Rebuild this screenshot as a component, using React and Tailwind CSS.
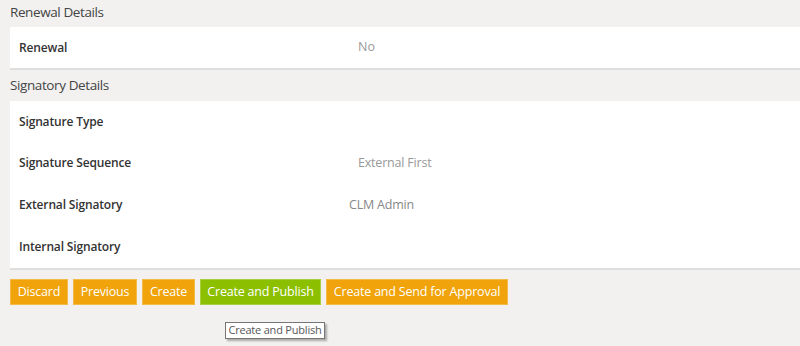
import React from 'react'

const font = { fontFamily: '"Open Sans", "Segoe UI", Arial, sans-serif' }

const labelCls = 'text-[12px] font-semibold text-[#333] tracking-[-0.15px]'

export default function App() {
  const buttons = [
    { text: 'Discard', w: 'w-[58px]', bg: 'bg-[#f0a30a]' },
    { text: 'Previous', w: 'w-[64px]', bg: 'bg-[#f0a30a]' },
    { text: 'Create', w: 'w-[53px]', bg: 'bg-[#f0a30a]' },
    { text: 'Create and Publish', w: 'w-[121px]', bg: 'bg-[#8cbf00]' },
    { text: 'Create and Send for Approval', w: 'w-[182px]', bg: 'bg-[#f0a30a]' },
  ]
  return (
    <div className="w-[800px] h-[346px] bg-[#f2f1f0] overflow-hidden" style={font}>
      <div className="h-[27px] pl-[10px] pt-[2px] text-[13.5px] text-[#444] tracking-[-0.4px]">Renewal Details</div>
      <div className="ml-[10px] bg-white border-b-2 border-[#dedede]">
        <div className="flex items-center h-[41px] pl-[9px]">
          <div className={`w-[339px] ${labelCls}`}>Renewal</div>
          <div className="text-[12.5px] text-[#999]">No</div>
        </div>
      </div>
      <div className="h-[31px] pl-[10px] flex items-center text-[13.5px] text-[#444] tracking-[-0.4px]">Signatory Details</div>
      <div className="ml-[10px] bg-white border-b-2 border-[#dedede] pl-[9px]">
        <div className="flex items-center h-[41px]">
          <div className={`w-[330px] ${labelCls}`}>Signature Type</div>
        </div>
        <div className="flex items-center h-[42px]">
          <div className={`w-[339px] ${labelCls}`}>Signature Sequence</div>
          <div className="text-[12.5px] text-[#999] tracking-[-0.2px]">External First</div>
        </div>
        <div className="flex items-center h-[42px]">
          <div className={`w-[330px] ${labelCls}`}>External Signatory</div>
          <div className="text-[12.5px] text-[#888] tracking-[-0.2px]">CLM Admin</div>
        </div>
        <div className="flex items-center h-[42px]">
          <div className={`w-[330px] ${labelCls}`}>Internal Signatory</div>
        </div>
      </div>
      <div className="flex gap-[5px] pl-[10px] mt-[9px]">
        {buttons.map(b => (
          <div
            key={b.text}
            className={`${b.w} ${b.bg} h-[26px] flex items-center justify-center border border-white/25 text-white text-[12.5px] tracking-[-0.2px]`}
          >
            {b.text}
          </div>
        ))}
      </div>
      <div className="relative">
        <div className="absolute left-[225px] top-[17px] w-[100px] h-[17px] bg-white border border-[#767676] shadow-[2px_2px_2px_rgba(0,0,0,0.3)] flex items-center justify-center text-[11px] text-[#575757] tracking-[-0.2px]">
          Create and Publish
        </div>
      </div>
    </div>
  )
}
